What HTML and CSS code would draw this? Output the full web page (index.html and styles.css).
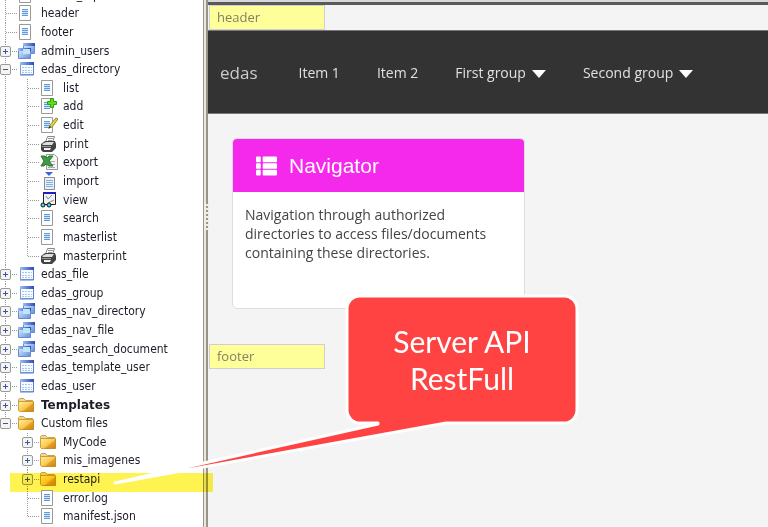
FILE: index.html
```html
<!DOCTYPE html>
<html lang="en">
<head>
    <meta charset="UTF-8">
    <meta name="viewport" content="width=device-width, initial-scale=1.0">
    <title>edas</title>
    <link rel="stylesheet" href="styles.css">
</head>
<body>
    <svg class="sprite" aria-hidden="true">
        <defs>
            <linearGradient id="gBlue" x1="0" y1="0" x2="1" y2="0">
                <stop offset="0" stop-color="#9dbcf6"/>
                <stop offset="1" stop-color="#2a4cb4"/>
            </linearGradient>
            <linearGradient id="gPane" x1="0" y1="0" x2="1" y2="1">
                <stop offset="0" stop-color="#e4f4ff"/>
                <stop offset="1" stop-color="#5f90dc"/>
            </linearGradient>
            <linearGradient id="gFolder" x1="0" y1="0" x2="1" y2="1">
                <stop offset="0" stop-color="#fff0a8"/>
                <stop offset="0.5" stop-color="#fccb50"/>
                <stop offset="1" stop-color="#d98a10"/>
            </linearGradient>
        </defs>
        <symbol id="page" viewBox="0 0 18 18">
            <path d="M1.500 1.500h11v15h-11z" fill="#fff" stroke="#999"/>
            <path d="M4 5.500h6M4 7.500h6M4 9.500h6M4 11.500h6" stroke="#5f9ade"/>
            <path d="M4 6.500h6M4 8.500h6M4 10.500h6" stroke="#cfe2f6"/>
        </symbol>
        <symbol id="page-add" viewBox="0 0 18 18">
            <use href="#page" width="18" height="18"/>
            <path d="M10.500 1.500h3v3h3v3h-3v3h-3v-3h-3v-3h3z" fill="#5fdc1c" stroke="#2fa010"/>
        </symbol>
        <symbol id="page-edit" viewBox="0 0 18 18">
            <use href="#page" width="18" height="18"/>
            <path d="M9 12l1-3 6-7 2 1-6 8z" fill="#e6da3c" stroke="#8c8430"/>
            <path d="M8 13l2-3 1 1z" fill="#222"/>
        </symbol>
        <symbol id="printer" viewBox="0 0 18 18">
            <path d="M5.500 7.500l2-6h7l-2 6z" fill="#fff" stroke="#888"/>
            <path d="M8 3.500h5M8 5.500h4" stroke="#999"/>
            <path d="M1 9l4-3h10l1 3v4l-4 4H3l-2-2z" fill="#444"/>
            <path d="M2 9l4-2h8l-2 3H3z" fill="#ddd"/>
            <path d="M2 11.500h9" stroke="#999"/>
            <path d="M4 13h7l-1 2H4z" fill="#f4f4f4"/>
        </symbol>
        <symbol id="excel" viewBox="0 0 18 18">
            <path d="M6.500 1.500h8l3 3v12h-11z" fill="#f4f4f4" stroke="#999"/>
            <path d="M10 8.500h5M10 11.500h5M8 14.500h7" stroke="#aaa"/>
            <path d="M1 3h4l2 2 2-2h4L9 8l4 5H9l-3-2-2 2H1l3-5z" fill="#3f9b43" stroke="#2a7a30"/>
        </symbol>
        <symbol id="import" viewBox="0 0 18 18">
            <path d="M5 0h8L9 4z" fill="#3d62d8"/>
            <path d="M4.500 5.500h10v12h-10z" fill="#e6f1fc" stroke="#8c8c8c"/>
            <path d="M6 8.500h7M6 10.500h7M6 12.500h7M6 14.500h7" stroke="#7fb0e4"/>
        </symbol>
        <symbol id="view" viewBox="0 0 18 18">
            <path d="M3.500 2.500h12v11h-12z" fill="#f2f2f2" stroke="#222"/>
            <path d="M3 2h13" stroke="#2020c0" stroke-width="2"/>
            <path d="M6 5l2 3 4-4M8 12l6-3" fill="none" stroke="#888"/>
            <circle cx="3" cy="14" r="2" fill="#38e0e0" stroke="#111"/>
            <circle cx="9" cy="14" r="2" fill="#38e0e0" stroke="#111"/>
        </symbol>
        <symbol id="table" viewBox="0 0 18 18">
            <path d="M2.500 2.500h13v12h-13z" fill="#f4faff" stroke="#7f9fd4"/>
            <path d="M2 2h14v3H2z" fill="url(#gBlue)"/>
            <path d="M15.500 5v10H2" fill="none" stroke="#5f80cc"/>
            <path d="M4 7.500h10M4 10.500h10M4 12.500h10" stroke="#a8c8ea" stroke-dasharray="2 1"/>
        </symbol>
        <symbol id="tables" viewBox="0 0 18 18">
            <path d="M5.500 1.500h11v10h-11z" fill="url(#gPane)" stroke="#6a88d4"/>
            <path d="M5 1h12v3H5z" fill="url(#gBlue)"/>
            <path d="M.500 6.500h12v10h-12z" fill="url(#gPane)" stroke="#6a88d4"/>
            <path d="M0 6h13v3H0z" fill="url(#gBlue)"/>
            <path d="M5 7h7v5H5z" fill="#c0e6f6"/>
        </symbol>
        <symbol id="folder" viewBox="0 0 18 18">
            <path d="M.500 5.500v-2l1-1h4l2 2h7v3h-14z" fill="#f3d98a" stroke="#c0a060"/>
            <path d="M.500 5.500h15v10h-14l-1-1z" fill="url(#gFolder)" stroke="#d09c38"/>
            <path d="M16 6v10H4z" fill="#b86a00" opacity="0.300"/>
        </symbol>
    </svg>

    <div class="workspace">
        <nav class="sidebar" aria-label="Project files">
            <ul class="tree">
                <li><div class="row"><svg><use href="#page"/></svg><span>search_top</span></div></li>
                <li><div class="row"><svg><use href="#page"/></svg><span>header</span></div></li>
                <li><div class="row"><svg><use href="#page"/></svg><span>footer</span></div></li>
                <li><div class="row"><button class="toggle" aria-label="Expand"></button><svg><use href="#tables"/></svg><span>admin_users</span></div></li>
                <li>
                    <div class="row"><button class="toggle open" aria-label="Collapse"></button><svg><use href="#table"/></svg><span>edas_directory</span></div>
                    <ul>
                        <li><div class="row"><svg><use href="#page"/></svg><span>list</span></div></li>
                        <li><div class="row"><svg><use href="#page-add"/></svg><span>add</span></div></li>
                        <li><div class="row"><svg><use href="#page-edit"/></svg><span>edit</span></div></li>
                        <li><div class="row"><svg><use href="#printer"/></svg><span>print</span></div></li>
                        <li><div class="row"><svg><use href="#excel"/></svg><span>export</span></div></li>
                        <li><div class="row"><svg><use href="#import"/></svg><span>import</span></div></li>
                        <li><div class="row"><svg><use href="#view"/></svg><span>view</span></div></li>
                        <li><div class="row"><svg><use href="#page"/></svg><span>search</span></div></li>
                        <li><div class="row"><svg><use href="#page"/></svg><span>masterlist</span></div></li>
                        <li><div class="row"><svg><use href="#printer"/></svg><span>masterprint</span></div></li>
                    </ul>
                </li>
                <li><div class="row"><button class="toggle" aria-label="Expand"></button><svg><use href="#table"/></svg><span>edas_file</span></div></li>
                <li><div class="row"><button class="toggle" aria-label="Expand"></button><svg><use href="#table"/></svg><span>edas_group</span></div></li>
                <li><div class="row"><button class="toggle" aria-label="Expand"></button><svg><use href="#tables"/></svg><span>edas_nav_directory</span></div></li>
                <li><div class="row"><button class="toggle" aria-label="Expand"></button><svg><use href="#tables"/></svg><span>edas_nav_file</span></div></li>
                <li><div class="row"><button class="toggle" aria-label="Expand"></button><svg><use href="#tables"/></svg><span>edas_search_document</span></div></li>
                <li><div class="row"><button class="toggle" aria-label="Expand"></button><svg><use href="#table"/></svg><span>edas_template_user</span></div></li>
                <li><div class="row"><button class="toggle" aria-label="Expand"></button><svg><use href="#table"/></svg><span>edas_user</span></div></li>
                <li><div class="row"><button class="toggle" aria-label="Expand"></button><svg><use href="#folder"/></svg><b>Templates</b></div></li>
                <li>
                    <div class="row"><button class="toggle open" aria-label="Collapse"></button><svg><use href="#folder"/></svg><span>Custom files</span></div>
                    <ul>
                        <li><div class="row"><button class="toggle" aria-label="Expand"></button><svg><use href="#folder"/></svg><span>MyCode</span></div></li>
                        <li><div class="row"><button class="toggle" aria-label="Expand"></button><svg><use href="#folder"/></svg><span>mis_imagenes</span></div></li>
                        <li><div class="row marked"><button class="toggle" aria-label="Expand"></button><svg><use href="#folder"/></svg><span>restapi</span></div></li>
                        <li><div class="row"><svg><use href="#page"/></svg><span>error.log</span></div></li>
                        <li><div class="row"><svg><use href="#page"/></svg><span>manifest.json</span></div></li>
                    </ul>
                </li>
            </ul>
        </nav>

        <div class="splitter"><div class="grip"></div></div>

        <main class="preview">
            <div class="frame-edge"></div>
            <div class="region">header</div>
            <nav class="navbar" aria-label="Main">
                <a class="brand" href="#">edas</a>
                <a href="#">Item 1</a>
                <a href="#">Item 2</a>
                <a class="group" href="#">First group</a>
                <a class="group" href="#">Second group</a>
            </nav>
            <article class="card">
                <h2>
                    <svg viewBox="0 0 22 20" aria-hidden="true">
                        <g fill="#fff">
                            <rect x="0" y="0" width="5" height="6" rx="1"/>
                            <rect x="7" y="0" width="15" height="6" rx="1"/>
                            <rect x="0" y="7" width="5" height="6" rx="1"/>
                            <rect x="7" y="7" width="15" height="6" rx="1"/>
                            <rect x="0" y="14" width="5" height="6" rx="1"/>
                            <rect x="7" y="14" width="15" height="6" rx="1"/>
                        </g>
                    </svg>
                    Navigator
                </h2>
                <p>Navigation through authorized directories to access files/documents containing these directories.</p>
            </article>
            <div class="region">footer</div>
        </main>
    </div>

    <!-- callout pointing at the restapi folder -->
    <div class="callout">
        <svg class="callout-shape" viewBox="0 0 470 194" aria-hidden="true">
            <path d="M250 2h204a13 13 0 0 1 13 13v101a13 13 0 0 1-13 13H336L5 189 268 130V129H250a13 13 0 0 1-13-13V15a13 13 0 0 1 13-13z"/>
        </svg>
        <p>Server API<br>RestFull</p>
    </div>
</body>
</html>
```
FILE: styles.css
```css
body {
    margin: 0;
    height: 100vh;
    overflow: hidden;
    position: relative;
    background: #f4f4f4;
    font-family: "Open Sans", sans-serif;
}
.sprite {
    position: absolute;
    width: 0;
    height: 0;
}
.workspace {
    display: flex;
    height: 100%;
}

/* project tree */
.sidebar {
    flex: none;
    width: 203px;
    background: #fff;
    color: #1c1c28;
    font-family: "DejaVu Sans Condensed", "DejaVu Sans", sans-serif;
    font-size: 12px;
    line-height: 19px;
}
.sidebar ul {
    list-style: none;
    margin: 0;
    padding: 0;
}
.sidebar .tree {
    margin-top: -14px;
}
.sidebar b {
    font-family: "DejaVu Sans", sans-serif;
}
.sidebar li {
    background: repeating-linear-gradient(#999 0 1px, transparent 1px 2px) 5px 0 / 1px 100% no-repeat;
}
.sidebar li li {
    background-position: 27px 0;
}
.sidebar li:last-child {
    background-size: 1px 9px;
}
.row {
    display: flex;
    align-items: flex-start;
    height: 19px;
    padding-left: 18px;
    position: relative;
    background: repeating-linear-gradient(90deg, #999 0 1px, transparent 1px 2px) 6px 9px / 12px 1px no-repeat;
}
li:nth-child(3n+1) > .row {
    height: 18px;
}
li li .row {
    padding-left: 40px;
    background-position: 28px 9px;
}
.row svg {
    width: 18px;
    height: 18px;
    margin-right: 5px;
}
.toggle {
    position: absolute;
    left: 0;
    top: 4px;
    width: 11px;
    height: 11px;
    padding: 0;
    border: 1px solid #999;
    border-radius: 2px;
    background:
        linear-gradient(#3b56a8, #3b56a8) center / 5px 1px no-repeat,
        linear-gradient(#3b56a8, #3b56a8) center / 1px 5px no-repeat,
        #f4f4f0;
}
.toggle.open {
    background: linear-gradient(#3b56a8, #3b56a8) center / 5px 1px no-repeat, #f4f4f0;
}
li li .toggle {
    left: 22px;
}
.marked::after {
    content: "";
    position: absolute;
    left: 10px;
    right: -10px;
    top: 3px;
    height: 19px;
    background: #fff352;
    mix-blend-mode: multiply;
}

.splitter {
    flex: none;
    width: 2px;
    display: flex;
    align-items: center;
    border: solid #98968c;
    border-width: 0 2px 0 1px;
    background: #ebe8d8;
}
.grip {
    flex: none;
    width: 5px;
    height: 28px;
    margin-bottom: 96px;
    background: repeating-linear-gradient(#98968c 0 2px, transparent 2px 4px) 2px 0 / 2px 100% no-repeat, #f0eee4;
}

/* page preview */
.preview {
    flex: 1;
    min-width: 0;
}
.frame-edge {
    height: 2px;
    background: #d8d8d8;
    border-bottom: 3px solid #5a5a5a;
}
.region {
    box-sizing: border-box;
    width: 116px;
    height: 25px;
    margin-left: 1px;
    padding-left: 7px;
    border: 1px solid #cfcfcf;
    background: #ffff99;
    color: #808066;
    font-size: 13px;
    line-height: 23px;
}
.navbar {
    display: flex;
    align-items: center;
    gap: 37px;
    height: 82px;
    padding-left: 12px;
    border: solid #777;
    border-width: 1px 0;
    background: #333;
}
.navbar a {
    color: #e0e0e0;
    font-size: 14px;
    text-decoration: none;
    white-space: nowrap;
}
.navbar .brand {
    margin-right: 4px;
    color: #ccc;
    font-size: 17px;
}
.navbar .group::after {
    content: "";
    display: inline-block;
    margin-left: 6px;
    border: 7px solid transparent;
    border-top: 8px solid #fff;
    border-bottom: 0;
}
.card {
    box-sizing: border-box;
    width: 293px;
    min-height: 171px;
    margin: 24px 24px 35px;
    overflow: hidden;
    border: 1px solid #ddd;
    border-radius: 5px;
    background: #fff;
}
.card h2 {
    display: flex;
    align-items: center;
    gap: 12px;
    height: 53px;
    margin: 0;
    padding-left: 23px;
    background: #f529eb;
    color: #fff;
    font: 21px "Liberation Sans", sans-serif;
}
.card h2 svg {
    width: 21px;
    height: 20px;
}
.card p {
    margin: 13px 12px;
    color: #444;
    font-size: 14px;
    line-height: 19px;
}

/* red balloon over the preview */
.callout {
    position: absolute;
    left: 110px;
    top: 294px;
    width: 470px;
}
.callout-shape {
    display: block;
    fill: #ff4343;
    stroke: #fff;
    stroke-width: 3;
    stroke-linejoin: round;
}
.callout p {
    position: absolute;
    left: 238px;
    top: 29px;
    width: 228px;
    margin: 0;
    color: #fff;
    font: 30px/37px Lato, sans-serif;
    text-align: center;
}
```
